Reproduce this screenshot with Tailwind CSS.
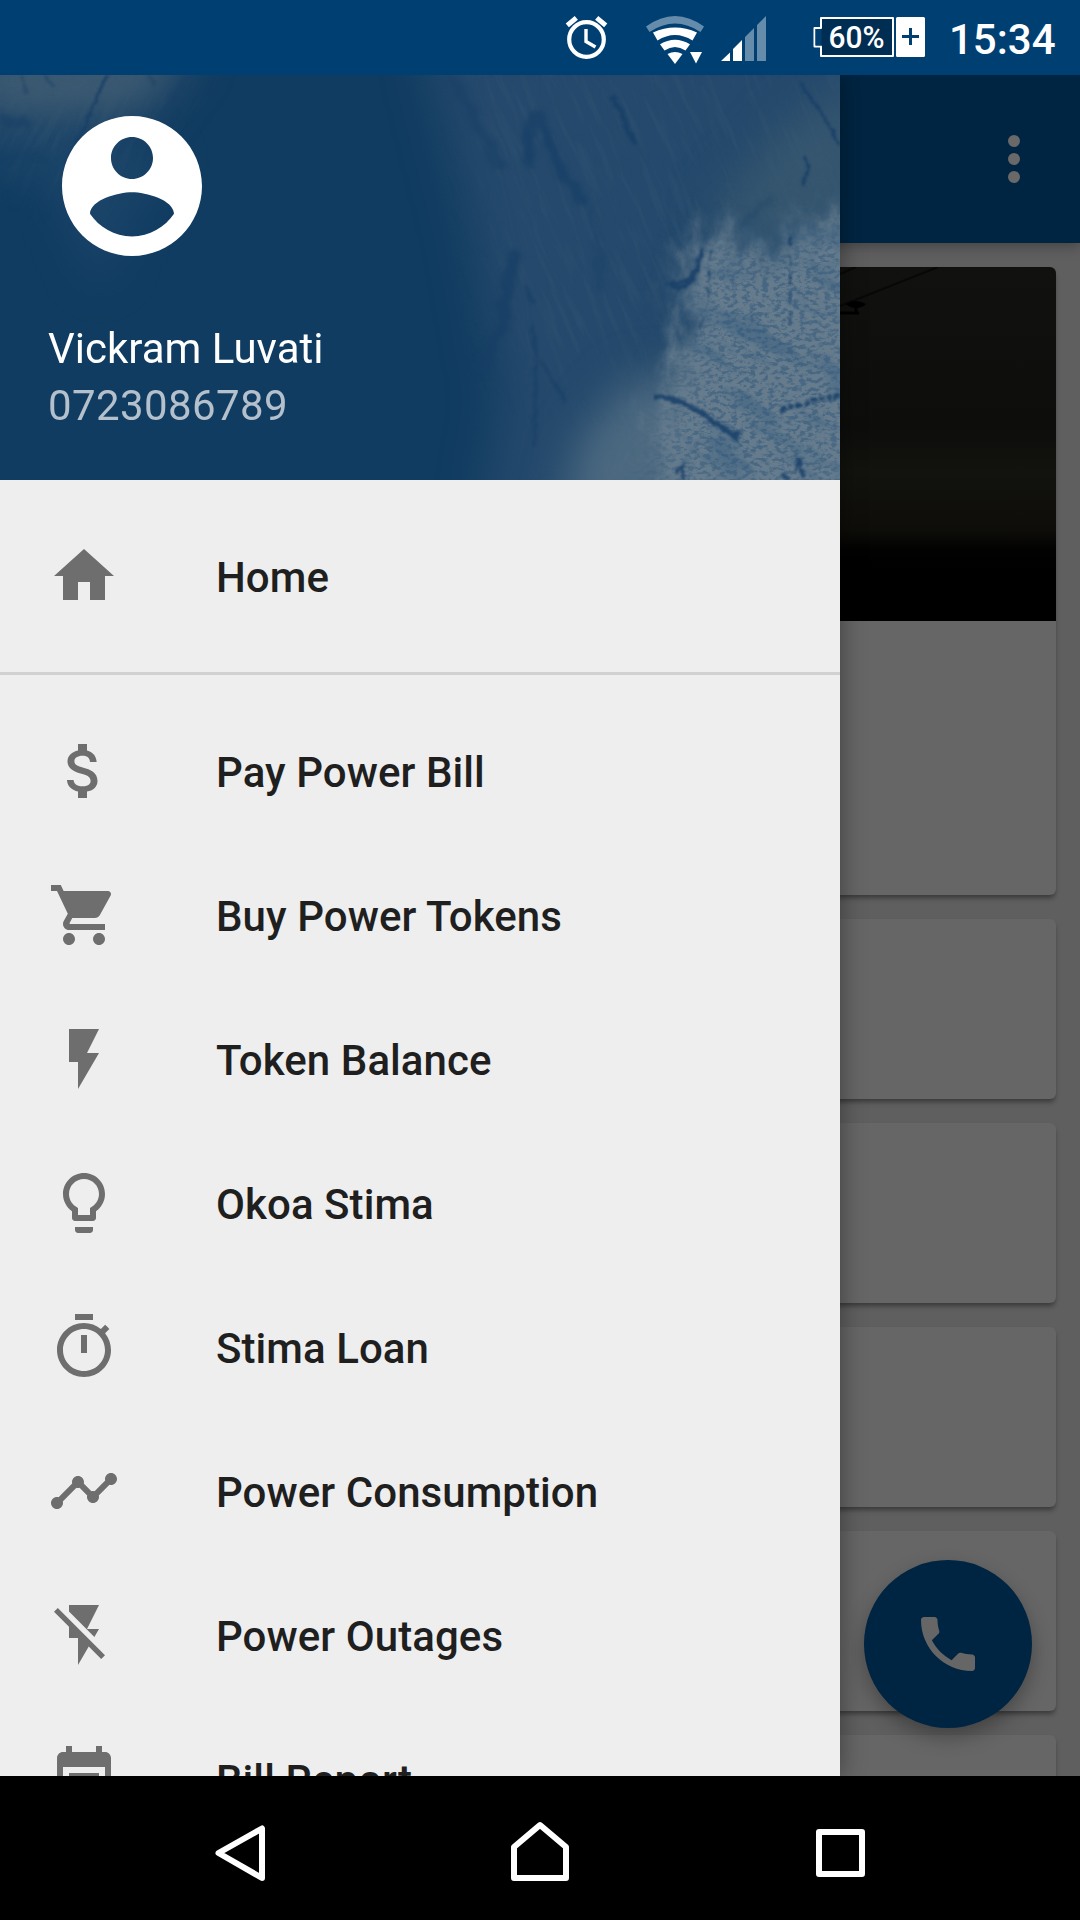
<!DOCTYPE html>
<html lang="en">
<head>
<meta charset="utf-8">
<title>Home</title>
<script src="https://cdn.jsdelivr.net/npm/@tailwindcss/browser@4"></script>
</head>
<body class="bg-black">
<div class="w-[1080px] h-[1920px] flex flex-col overflow-hidden font-['Roboto',sans-serif]">

  <!-- Status bar -->
  <header class="h-[75px] shrink-0 bg-[#003f72] flex items-center">
    <svg class="w-[380px] h-[75px] ml-[560px] shrink-0" viewBox="560 0 380 75" fill="none">
      <g stroke="#fff">
        <circle cx="586.5" cy="39.5" r="17.3" stroke-width="4.2"/>
        <path d="M586 29v12.500l9.500 5.500" stroke-width="3.400"/>
        <path d="M567.300 25.300l9-7.500M605.700 25.300l-9-7.500" stroke-width="5"/>
      </g>
      <path d="M646 26.500Q675 5.500 704 26.500L700.500 32Q675 15 649.500 32Z" fill="#668cab"/>
      <path d="M653 32.500Q675 22.500 697 32.500L692.500 40.500Q675 29.500 657.500 40.500Z" fill="#fff"/>
      <path d="M660 44.300Q675 35 690 44.300L685.500 50.500Q675 43.500 664.500 50.500Z" fill="#fff"/>
      <path d="M667.500 54Q675 50 682.500 54L675 64Z" fill="#fff"/>
      <path d="M690 52h12l-6 11.500Z" fill="#fff"/>
      <path d="M721 61l9-8.500V61ZM733 61V49l9-9v21Z" fill="#fff"/>
      <path d="M745 61V37l9-9v33ZM757 61V25l9-9v45Z" fill="#668cab"/>
      <path d="M821 18h72v38h-72v-9.500h-6.500v-18.500h6.500Z" fill="#002d52" stroke="#fff" stroke-width="2" stroke-linejoin="round"/>
      <path d="M815.500 29h6v16.500h-6Z" fill="#003f72"/>
      <rect x="896" y="17" width="29" height="40" rx="1.500" fill="#fff"/>
      <path d="M902 36.500h17M910.500 28v17" stroke="#003f72" stroke-width="3"/>
      <text x="828.500" y="48" textLength="56" lengthAdjust="spacingAndGlyphs" font-family="Roboto" font-weight="500" font-size="31.500" fill="#fff">60%</text>
    </svg>
    <span class="ml-[9px] text-[42px] leading-[49px] font-medium text-white mt-[3px]">15:34</span>
  </header>

  <div class="relative h-[1701px] shrink-0 overflow-hidden bg-[#5f5f5f]">

    <!-- Dimmed screen behind the drawer -->
    <main class="h-full flex flex-col">
      <div class="relative z-10 h-[168px] shrink-0 bg-[#002542] flex items-center justify-end pr-[60px] shadow-[0_4px_12px_rgba(0,0,0,0.28)]">
        <svg class="w-3 h-12" viewBox="0 0 12 48" fill="#696969"><circle cx="6" cy="6" r="6"/><circle cx="6" cy="24" r="6"/><circle cx="6" cy="42" r="6"/></svg>
      </div>
      <div class="flex flex-col gap-6 p-6">
        <section class="h-[628px] shrink-0 rounded-md bg-[#666] overflow-hidden shadow-[0_4px_5px_-1px_rgba(0,0,0,0.4)]">
          <div class="h-[354px] bg-[linear-gradient(to_bottom,#11110f_0%,#0d0d0c_45%,#12120e_58%,#0e0d09_74%,#020202_80%,#000_86%)]">
            <svg class="w-full h-full" viewBox="24 267 1032 354" fill="none">
              <path d="M840 274l16-7M840 306l98-39" stroke="#080808" stroke-width="2"/>
              <path d="M846 304q10-6 20 0q-4 4-10 4q-6 0-10-4Z" fill="#000"/>
              <path d="M856 304v8M836 313h23" stroke="#000" stroke-width="3"/>
            </svg>
          </div>
        </section>
        <section class="h-[180px] shrink-0 rounded-md bg-[#666] shadow-[0_4px_5px_-1px_rgba(0,0,0,0.4)]"></section>
        <section class="h-[180px] shrink-0 rounded-md bg-[#666] shadow-[0_4px_5px_-1px_rgba(0,0,0,0.4)]"></section>
        <section class="h-[180px] shrink-0 rounded-md bg-[#666] shadow-[0_4px_5px_-1px_rgba(0,0,0,0.4)]"></section>
        <section class="h-[180px] shrink-0 rounded-md bg-[#666] shadow-[0_4px_5px_-1px_rgba(0,0,0,0.4)]"></section>
        <section class="h-[180px] shrink-0 rounded-md bg-[#666] shadow-[0_4px_5px_-1px_rgba(0,0,0,0.4)]"></section>
      </div>
    </main>

    <button class="absolute right-12 bottom-12 size-[168px] rounded-full bg-[#002542] flex items-center justify-center shadow-[0_9px_20px_rgba(0,0,0,0.3)]" aria-label="Call">
      <svg class="size-[72px]" viewBox="0 0 24 24" fill="#666"><path d="M6.620 10.790c1.440 2.830 3.760 5.140 6.590 6.590l2.200-2.200c.27-.27.67-.36 1.020-.24 1.120.37 2.330.57 3.570.57.55 0 1 .45 1 1V20c0 .55-.45 1-1 1-9.390 0-17-7.610-17-17 0-.55.45-1 1-1h3.500c.55 0 1 .45 1 1 0 1.250.2 2.450.57 3.570.11.35.03.74-.25 1.020l-2.200 2.200z"/></svg>
    </button>

    <!-- Navigation drawer -->
    <aside class="absolute left-0 top-0 z-20 w-[840px] h-full bg-[#eee] flex flex-col shadow-[0_0_24px_rgba(0,0,0,0.4)]">
      <div class="relative h-[405px] shrink-0 overflow-hidden bg-[#113c61]">
        <svg class="absolute inset-0 w-full h-full" viewBox="0 75 840 405" fill="none" color-interpolation-filters="sRGB">
          <defs>
            <filter id="soft" x="-30%" y="-30%" width="160%" height="160%"><feGaussianBlur stdDeviation="22"/></filter>
            <filter id="rough" x="-20%" y="-20%" width="140%" height="140%">
              <feGaussianBlur stdDeviation="13" result="b"/>
              <feTurbulence type="fractalNoise" baseFrequency=".05 .03" numOctaves="5" seed="4" result="n"/>
              <feDisplacementMap in="b" in2="n" scale="50" xChannelSelector="R" yChannelSelector="G"/>
            </filter>
            <filter id="edge" x="0" y="75" width="840" height="405" filterUnits="userSpaceOnUse">
              <feTurbulence type="fractalNoise" baseFrequency=".12" numOctaves="3" seed="8" result="n"/>
              <feDisplacementMap in="SourceGraphic" in2="n" scale="6" xChannelSelector="R" yChannelSelector="G"/>
              <feGaussianBlur stdDeviation=".9"/>
            </filter>
            <filter id="softedge" x="0" y="75" width="840" height="405" filterUnits="userSpaceOnUse">
              <feTurbulence type="fractalNoise" baseFrequency=".06" numOctaves="3" seed="5" result="n"/>
              <feDisplacementMap in="SourceGraphic" in2="n" scale="14" xChannelSelector="R" yChannelSelector="G"/>
              <feGaussianBlur stdDeviation="2"/>
            </filter>
            <filter id="speckle" x="0" y="0" width="100%" height="100%">
              <feTurbulence type="fractalNoise" baseFrequency=".16 .24" numOctaves="4" seed="11"/>
              <feColorMatrix values="0 0 0 0 .19  0 0 0 0 .34  0 0 0 0 .48  5 0 0 0 -2.300"/>
            </filter>
            <filter id="patch" x="0" y="0" width="100%" height="100%">
              <feTurbulence type="fractalNoise" baseFrequency=".012 .035" numOctaves="4" seed="21"/>
              <feColorMatrix values="0 0 0 0 .19  0 0 0 0 .35  0 0 0 0 .49  6 0 0 0 -3"/>
            </filter>
            <filter id="brush" x="0" y="0" width="100%" height="100%">
              <feTurbulence type="fractalNoise" baseFrequency=".14 .016" numOctaves="4" seed="3"/>
              <feColorMatrix values="0 0 0 0 .24  0 0 0 0 .36  0 0 0 0 .46  4 0 0 0 -1.900"/>
            </filter>
            <mask id="lightArea"><path d="M715 225L770 250L860 200V500H650L680 380L690 290Z" fill="#fff" filter="url(#soft)"/></mask>
            <mask id="streaks"><path d="M470 50H870V250L700 260L640 380L520 380Z" fill="#fff" filter="url(#soft)"/><path d="M-10 60H185L120 170L60 190L-10 150Z" fill="#fff" filter="url(#soft)"/></mask>
          </defs>
          <path d="M-30 40H200L150 110L60 130L-30 120Z" fill="#3d5a72" filter="url(#soft)"/>
          <path d="M110 130L170 160L130 220L100 290L50 180L-20 170V120Z" fill="#1f486c" opacity=".7" filter="url(#soft)"/>
          <path d="M420 30H880V520H480L500 400L470 230Z" fill="#24496c" filter="url(#soft)"/>
          <path d="M870 80L790 120L710 210L760 260L870 220Z" fill="#36566f" filter="url(#soft)"/>
          <path d="M560 520L580 440L630 380L710 370V520Z" fill="#4d6a81" filter="url(#soft)"/>
          <path d="M710 225L770 262L800 225L880 210V520H680L655 430L670 370L690 320L680 280Z" fill="#667c8d" filter="url(#rough)"/>
          <g mask="url(#streaks)">
            <g transform="rotate(-22 640 270)"><rect x="380" y="-100" width="620" height="760" filter="url(#brush)" opacity=".22"/></g>
            <g transform="rotate(26 100 150)"><rect x="-100" y="-50" width="330" height="360" filter="url(#brush)" opacity=".2"/></g>
          </g>
          <g mask="url(#lightArea)">
            <g transform="rotate(28 740 350)"><rect x="560" y="150" width="400" height="420" filter="url(#patch)" opacity=".4"/></g>
            <rect x="600" y="150" width="240" height="330" filter="url(#speckle)" opacity=".55"/>
          </g>
          <g stroke="#173f66" filter="url(#softedge)" stroke-linecap="round">
            <path d="M535 115Q525 130 529 162M539 115Q554 160 582 200" stroke-width="11" opacity=".7"/>
            <path d="M455 80Q472 118 488 145L500 165" stroke-width="10" opacity=".45"/>
            <path d="M514 256Q508 280 504 310Q498 345 480 368" stroke-width="13" opacity=".75"/>
            <path d="M185 80L155 130M0 118l25 5M0 152l38 6" stroke-width="7" opacity=".6"/>
            <path d="M590 210Q602 250 600 290M740 225L770 200" stroke-width="6" opacity=".3"/>
          </g>
          <g stroke="#183f68" filter="url(#edge)" opacity=".85">
            <path d="M108 75Q92 105 88 120Q76 145 66 165" stroke-width="3"/>
            <path d="M22 75l4 18M45 75l8 12M148 75l6 10" stroke-width="3" opacity=".5"/>
            <path d="M612 96Q625 120 635 144" stroke-width="5"/>
            <path d="M526 286l8 18M532 326l4 30l-1 90M540 360l26 42" stroke-width="3" opacity=".7"/>
            <path d="M703 248l-6 22l-10 10l-16 4l8 5l12-8l8-12" stroke-width="4"/>
            <path d="M710 250l-2 48M702 318l-4 20M790 235v95" stroke-width="2" stroke-dasharray="12 7"/>
            <path d="M655 396Q680 398 706 416L736 438L736 430" stroke-width="5"/>
            <path d="M780 410Q800 405 815 400L840 396" stroke-width="5" stroke-dasharray="6 2"/>
            <path d="M800 84Q822 110 840 145M803 158l6 8l-6 20M676 474l6-7M683 464v16M795 472l4-14l4 20M782 474l9 6" stroke-width="3"/>
          </g>
        </svg>
        <div class="relative flex flex-col px-12 pt-[27px]">
          <svg class="size-[168px]" viewBox="0 0 24 24" fill="#fff"><path d="M12 2C6.480 2 2 6.480 2 12s4.480 10 10 10 10-4.480 10-10S17.520 2 12 2zm0 3c1.660 0 3 1.340 3 3s-1.340 3-3 3-3-1.340-3-3 1.340-3 3-3zm0 14.200c-2.500 0-4.710-1.280-6-3.220.03-1.990 4-3.080 6-3.080 1.990 0 5.970 1.090 6 3.080-1.290 1.940-3.500 3.220-6 3.220z"/></svg>
          <p class="mt-[50px] text-[42px] leading-[57px] text-white">Vickram Luvati</p>
          <p class="text-[42px] leading-[57px] tracking-[0.4px] text-[#b4c1cc]">0723086789</p>
        </div>
      </div>

      <nav class="flex flex-col min-h-0 overflow-hidden pt-6 text-[42px] font-medium tracking-[0.07px] text-[#1f1f1f]">
        <a class="h-36 shrink-0 flex items-center gap-24 px-12">
          <svg class="size-[72px]" viewBox="0 0 24 24" fill="#6e6e6e"><path d="M10 20v-6h4v6h5v-8h3L12 3 2 12h3v8z"/></svg><span class="pt-[2px]">Home</span>
        </a>
        <hr class="my-6 h-[3px] shrink-0 border-0 bg-[#d1d1d1]">
        <a class="h-36 shrink-0 flex items-center gap-24 px-12">
          <svg class="size-[72px]" viewBox="0 0 24 24" fill="#6e6e6e"><path d="M11.800 10.900c-2.270-.59-3-1.200-3-2.150 0-1.090 1.010-1.850 2.700-1.850 1.780 0 2.440.85 2.500 2.100h2.210c-.07-1.720-1.120-3.300-3.210-3.810V3h-3v2.160c-1.940.42-3.500 1.680-3.500 3.610 0 2.310 1.910 3.460 4.700 4.130 2.500.6 3 1.480 3 2.410 0 .69-.49 1.790-2.700 1.790-2.060 0-2.870-.92-2.980-2.100h-2.200c.12 2.190 1.760 3.420 3.680 3.830V21h3v-2.150c1.950-.37 3.500-1.500 3.500-3.550 0-2.840-2.430-3.810-4.700-4.400z"/></svg><span class="pt-[2px]">Pay Power Bill</span>
        </a>
        <a class="h-36 shrink-0 flex items-center gap-24 px-12">
          <svg class="size-[72px]" viewBox="0 0 24 24" fill="#6e6e6e"><path d="M7 18c-1.100 0-1.990.9-1.990 2S5.900 22 7 22s2-.9 2-2-.9-2-2-2zM1 2v2h2l3.600 7.590-1.350 2.450c-.16.28-.25.61-.25.96 0 1.100.9 2 2 2h12v-2H7.420c-.14 0-.25-.11-.25-.25l.03-.12.900-1.630h7.450c.75 0 1.410-.41 1.750-1.030l3.580-6.490c.08-.14.12-.31.12-.48 0-.55-.45-1-1-1H5.210l-.94-2H1zm16 16c-1.100 0-1.990.9-1.990 2s.89 2 1.990 2 2-.9 2-2-.9-2-2-2z"/></svg><span class="pt-[2px]">Buy Power Tokens</span>
        </a>
        <a class="h-36 shrink-0 flex items-center gap-24 px-12">
          <svg class="size-[72px]" viewBox="0 0 24 24" fill="#6e6e6e"><path d="M7 2v11h3v9l7-12h-4l4-8z"/></svg><span class="pt-[2px]">Token Balance</span>
        </a>
        <a class="h-36 shrink-0 flex items-center gap-24 px-12">
          <svg class="size-[72px]" viewBox="0 0 24 24" fill="#6e6e6e"><path d="M9 21c0 .55.45 1 1 1h4c.55 0 1-.45 1-1v-1H9v1zm3-19C8.140 2 5 5.140 5 9c0 2.380 1.190 4.470 3 5.740V17c0 .55.45 1 1 1h6c.55 0 1-.45 1-1v-2.260c1.810-1.270 3-3.360 3-5.740 0-3.860-3.140-7-7-7zm2.850 11.100l-.85.6V16h-4v-2.300l-.85-.6C7.800 12.160 7 10.630 7 9c0-2.760 2.240-5 5-5s5 2.240 5 5c0 1.630-.8 3.160-2.150 4.100z"/></svg><span class="pt-[2px]">Okoa Stima</span>
        </a>
        <a class="h-36 shrink-0 flex items-center gap-24 px-12">
          <svg class="size-[72px]" viewBox="0 0 24 24" fill="#6e6e6e"><path d="M15 1H9v2h6V1zm-4 13h2V8h-2v6zm8.030-6.610l1.420-1.420c-.43-.51-.9-.99-1.410-1.410l-1.420 1.420C16.070 4.740 14.120 4 12 4c-4.970 0-9 4.030-9 9s4.020 9 9 9 9-4.030 9-9c0-2.120-.74-4.070-1.970-5.610zM12 20c-3.870 0-7-3.130-7-7s3.130-7 7-7 7 3.130 7 7-3.130 7-7 7z"/></svg><span class="pt-[2px]">Stima Loan</span>
        </a>
        <a class="h-36 shrink-0 flex items-center gap-24 px-12">
          <svg class="size-[72px]" viewBox="0 0 24 24" fill="#6e6e6e"><path d="M23 8c0 1.100-.9 2-2 2-.18 0-.35-.02-.51-.07l-3.560 3.550c.05.16.07.34.07.52 0 1.100-.9 2-2 2s-2-.9-2-2c0-.18.02-.36.07-.52l-2.550-2.550c-.16.05-.34.07-.52.07s-.36-.02-.52-.07l-4.550 4.560c.05.16.07.33.07.51 0 1.100-.9 2-2 2s-2-.9-2-2 .9-2 2-2c.18 0 .35.02.51.07l4.560-4.550C8.020 9.360 8 9.180 8 9c0-1.100.9-2 2-2s2 .9 2 2c0 .18-.02.36-.07.52l2.550 2.550c.16-.05.34-.07.52-.07s.36.02.52.07l3.550-3.560C19.020 8.350 19 8.180 19 8c0-1.100.9-2 2-2s2 .9 2 2z"/></svg><span class="pt-[2px]">Power Consumption</span>
        </a>
        <a class="h-36 shrink-0 flex items-center gap-24 px-12">
          <svg class="size-[72px]" viewBox="0 0 24 24" fill="#6e6e6e"><path d="M3.270 3L2 4.270l5 5V13h3v9l3.580-6.140L17.730 20 19 18.730 3.270 3zM17 10h-4l4-8H7v2.180l8.460 8.460L17 10z"/></svg><span class="pt-[2px]">Power Outages</span>
        </a>
        <a class="h-36 shrink-0 flex items-center gap-24 px-12">
          <svg class="size-[72px]" viewBox="0 0 24 24" fill="#6e6e6e"><path d="M17 10H7v2h10v-2zm2-7h-1V1h-2v2H8V1H6v2H5c-1.110 0-1.990.9-1.990 2L3 19c0 1.100.89 2 2 2h14c1.100 0 2-.9 2-2V5c0-1.100-.9-2-2-2zm0 16H5V8h14v11zm-5-5H7v2h7v-2z"/></svg><span class="pt-[2px]">Bill Report</span>
        </a>
      </nav>
    </aside>
  </div>

  <!-- System navigation -->
  <footer class="h-36 shrink-0 bg-black flex items-center justify-center gap-[156px]">
    <svg class="w-[144px] h-36" viewBox="168 1776 144 144" fill="none" stroke="#fff" stroke-width="6" stroke-linejoin="round"><path d="M262 1828.500v49.500L218.500 1853Z"/></svg>
    <svg class="w-[144px] h-36" viewBox="468 1776 144 144" fill="none" stroke="#fff" stroke-width="6" stroke-linejoin="round"><path d="M514 1878v-31l26-22l26 22v31Z"/></svg>
    <svg class="w-[144px] h-36" viewBox="768 1776 144 144" fill="none" stroke="#fff" stroke-width="6" stroke-linejoin="round"><path d="M819 1832h43v42h-43Z"/></svg>
  </footer>
</div>
</body>
</html>
